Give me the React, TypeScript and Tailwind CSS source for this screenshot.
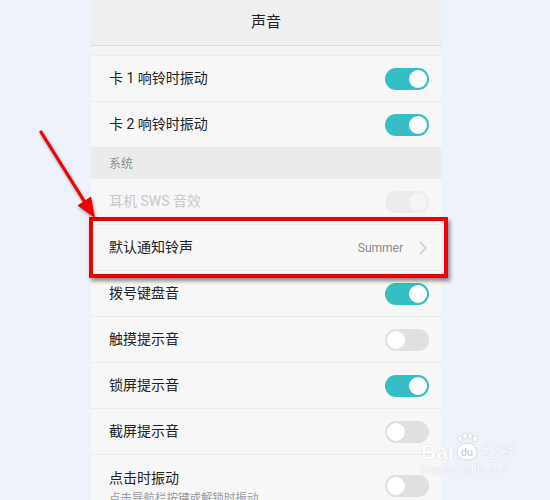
import React from "react";

// Switch drawn like the phone's settings toggle
const Toggle = ({ on, disabled }: { on: boolean; disabled?: boolean }) => {
  if (disabled) {
    return (
      <div className="w-[44px] h-[22px] rounded-full bg-[#ececec] p-[2px] flex justify-end">
        <div className="w-[18px] h-[18px] rounded-full bg-[#f4f4f4]" />
      </div>
    );
  }
  return (
    <div
      className={
        on
          ? "w-[44px] h-[22px] rounded-full bg-[#35bec3] p-[2px] flex justify-end"
          : "w-[44px] h-[22px] rounded-full bg-[#e0e0e0] p-[2px] flex justify-start"
      }
    >
      <div className="w-[18px] h-[18px] rounded-full bg-white" />
    </div>
  );
};

const Row = ({
  title,
  on,
  disabled,
}: {
  title: string;
  on: boolean;
  disabled?: boolean;
}) => (
  <div className="h-[46px] shrink-0 border-b border-[#ebebeb] flex items-center justify-between pl-[18px] pr-[12px]">
    <span
      className={
        disabled ? "text-[14px] text-[#c9c9c9]" : "text-[14px] text-[#222]"
      }
    >
      {title}
    </span>
    <Toggle on={on} disabled={disabled} />
  </div>
);

const App = () => {
  return (
    <div
      className="relative w-[550px] h-[500px] overflow-hidden bg-[#eef2fa] flex"
      style={{ fontFamily: 'Roboto, "Noto Sans CJK SC", sans-serif' }}
    >
      {/* Phone screen */}
      <div className="ml-[91px] w-[350px] h-full bg-[#f7f7f7] flex flex-col">
        <div className="h-[46px] shrink-0 bg-[#efefef] border-b border-[#dcdcdc] flex items-center justify-center">
          <span className="text-[15px] text-[#222]">声音</span>
        </div>
        <div className="h-[10px] shrink-0 bg-[#f4f4f4] border-b border-[#ececec]" />

        <Row title="卡 1 响铃时振动" on />
        <Row title="卡 2 响铃时振动" on />

        {/* Section header */}
        <div className="h-[31px] shrink-0 bg-[#ebebeb] flex items-center pl-[18px]">
          <span className="text-[12px] text-[#8e8e8e]">系统</span>
        </div>

        <Row title="耳机 SWS 音效" on disabled />

        <div className="h-[46px] shrink-0 border-b border-[#ebebeb] flex items-center justify-between pl-[18px] pr-[14px]">
          <span className="text-[14px] text-[#222]">默认通知铃声</span>
          <div className="flex items-center gap-[16px]">
            <span className="text-[12px] text-[#8a8a8a]">Summer</span>
            <svg width="8" height="14" viewBox="0 0 8 14">
              <path
                d="M1 1 L7 7 L1 13"
                fill="none"
                stroke="#c6c6c6"
                strokeWidth="1.2"
              />
            </svg>
          </div>
        </div>

        <Row title="拨号键盘音" on />
        <Row title="触摸提示音" on={false} />
        <Row title="锁屏提示音" on />
        <Row title="截屏提示音" on={false} />

        <div className="shrink-0 flex items-start justify-between pl-[18px] pr-[12px] pt-[12px]">
          <div className="flex flex-col">
            <span className="text-[14px] text-[#222] leading-[22px]">
              点击时振动
            </span>
            <span className="text-[11.5px] text-[#9a9a9a] leading-[18px]">
              点击导航栏按键或解锁时振动
            </span>
          </div>
          <div className="mt-[8px]">
            <Toggle on={false} />
          </div>
        </div>
      </div>

      {/* Red highlight box */}
      <div className="absolute left-[89px] top-[217px] w-[359px] h-[61px] border-[4px] border-[#f00000] shadow-[2px_3px_4px_rgba(0,0,0,0.45)]" />

      {/* Red arrow */}
      <svg
        className="absolute left-0 top-0"
        width="550"
        height="500"
        viewBox="0 0 550 500"
        style={{ filter: "drop-shadow(1px 2px 1.5px rgba(0,0,0,0.4))" }}
      >
        <line
          x1="41"
          y1="132"
          x2="86"
          y2="204"
          stroke="#f00000"
          strokeWidth="3.2"
          strokeLinecap="round"
        />
        <polygon points="95,218 77.5,205.5 91,196.5" fill="#f00000" />
      </svg>

      {/* Baidu jingyan watermark */}
      <div className="absolute left-[421px] top-[440px] flex flex-col items-start opacity-80">
        <div className="flex items-center">
          <span
            className="text-[21px] font-bold text-white leading-none"
            style={{
              fontFamily: '"Liberation Sans", sans-serif',
              textShadow: "0 0 1px #b8b8b8",
            }}
          >
            Bai
          </span>
          <svg width="26" height="30" viewBox="0 0 26 30" className="-mt-[8px]">
            <g fill="#fff" stroke="#bdbdbd" strokeWidth="0.6">
              <ellipse cx="6" cy="7" rx="2.5" ry="3.2" />
              <ellipse cx="11" cy="4" rx="2.5" ry="3.2" />
              <ellipse cx="16" cy="4" rx="2.5" ry="3.2" />
              <ellipse cx="21" cy="7" rx="2.5" ry="3.2" />
              <path d="M3 20 Q4 11 13 11 Q22 11 23 20 Q23 28 13 28 Q3 28 3 20 Z" />
            </g>
            <text
              x="13"
              y="24"
              textAnchor="middle"
              fontSize="10"
              fontWeight="bold"
              fill="#c8c8c8"
              fontFamily="Liberation Sans, sans-serif"
            >
              du
            </text>
          </svg>
          <span
            className="ml-[3px] text-[17px] text-white leading-none"
            style={{ textShadow: "0 0 1px #b0b0b0" }}
          >
            经验
          </span>
        </div>
        <span
          className="text-[11px] text-white leading-none mt-[2px]"
          style={{
            fontFamily: '"Liberation Sans", sans-serif',
            textShadow: "0 0 1px #b0b0b0",
          }}
        >
          jingyan.baidu.com
        </span>
      </div>
    </div>
  );
};

export default App;
